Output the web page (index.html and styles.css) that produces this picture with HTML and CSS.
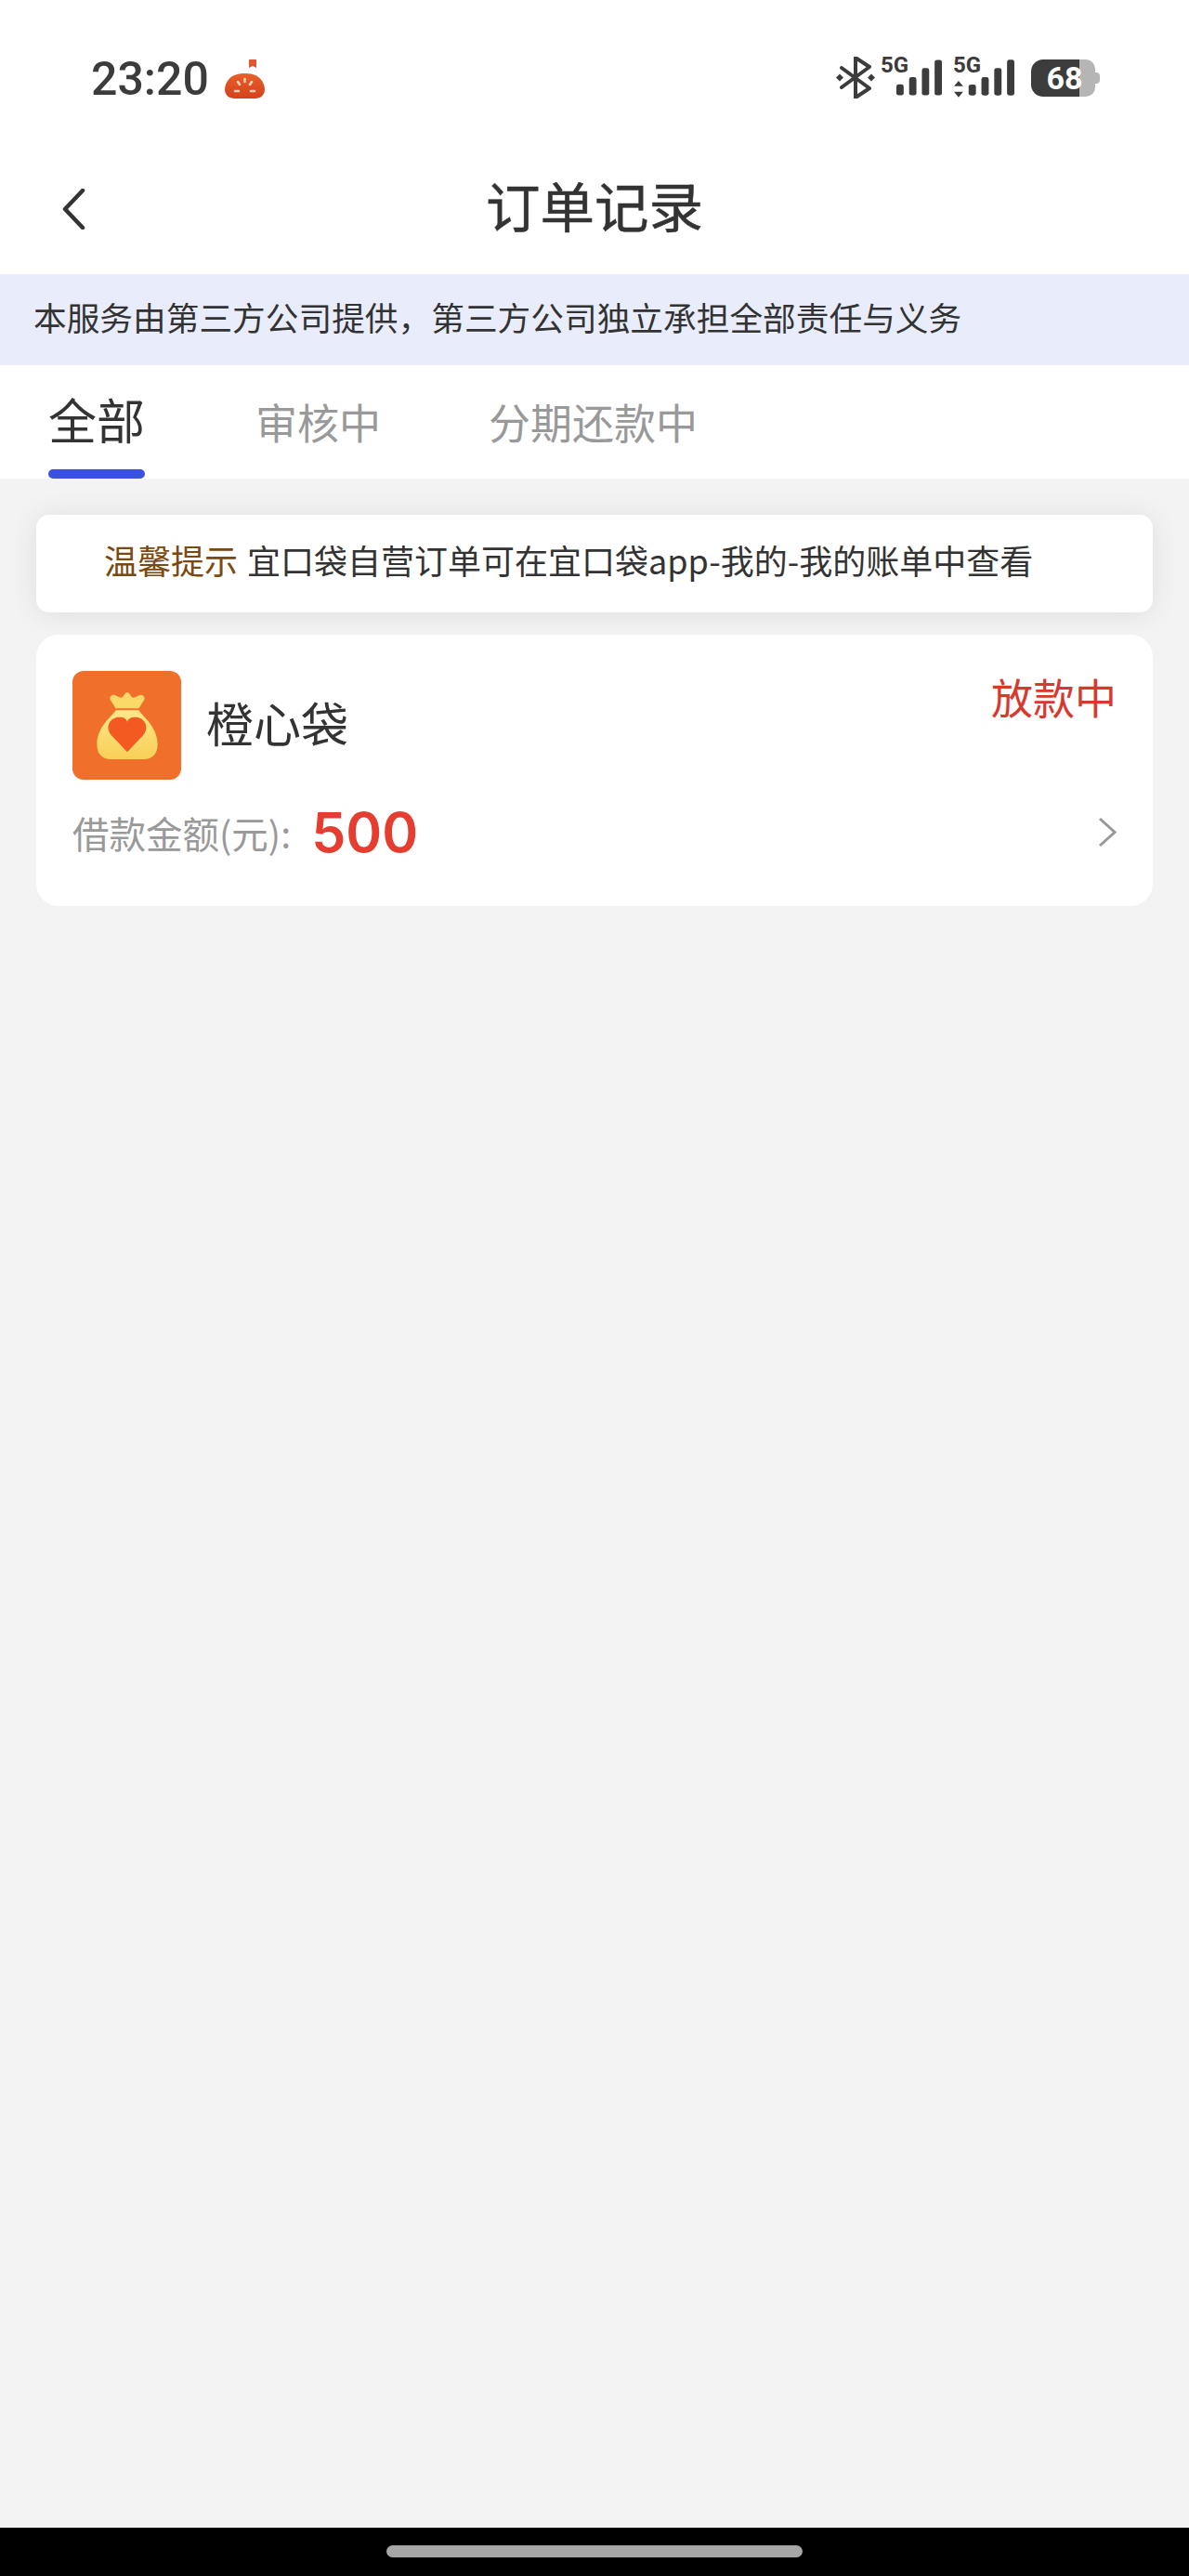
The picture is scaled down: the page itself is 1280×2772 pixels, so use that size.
FILE: index.html
```html
<!doctype html>
<html lang="zh-CN">
<head>
	<meta charset="UTF-8">
	<title>订单记录</title>
	<link rel="stylesheet" href="styles.css">
</head>
<body>
	<div class="page">
		<!-- 状态栏 -->
		<div class="status-bar">
			<div class="status-left">
				<span class="time">23:20</span>
				<svg class="tomato" width="43" height="42" viewBox="0 0 43 42">
					<defs>
						<linearGradient id="tomato" x1="0" y1="0" x2="0" y2="1">
							<stop offset="0" stop-color="#e8602a"/>
							<stop offset="1" stop-color="#d4411c"/>
						</linearGradient>
					</defs>
					<path d="M26 0h8v9l-4-2-4 2z" fill="#e2572f"/>
					<path d="M21.500 15c6 0 12 1 16 5 3.500 3.500 5.500 8 5.500 12 0 6-4 10-11 10H11C4 42 0 38 0 32c0-4 2-8.500 5.500-12 4-4 10-5 16-5z" fill="url(#tomato)"/>
					<g stroke="#f8d2b4" stroke-width="2.600" stroke-linecap="round">
						<path d="M21.500 21v3M14 24l2 3M29 24l-2 3M11 34h4M28 34h4"/>
					</g>
				</svg>
			</div>
			<div class="status-right">
				<svg width="42" height="45" viewBox="0 0 42 45">
					<path d="M6 12l30 22-15 10V1l15 10L6 33" fill="none" stroke="#3c3c3c" stroke-width="4" stroke-linejoin="round" stroke-linecap="round"/>
					<path d="M4 18.500l4 4-4 4-4-4zM38 18.500l4 4-4 4-4-4z" fill="#3c3c3c"/>
				</svg>
				<div class="signal">
					<span class="net">5G</span>
					<svg class="bars" width="49" height="39" viewBox="0 0 50 39">
						<rect x="0" y="27" width="8" height="12" rx="2.500"/>
						<rect x="14" y="19" width="8" height="20" rx="2.500"/>
						<rect x="28" y="9" width="8" height="30" rx="2.500"/>
						<rect x="42" y="0" width="8" height="39" rx="2.500"/>
					</svg>
				</div>
				<div class="signal signal-two">
					<span class="net">5G</span>
					<svg class="bars" width="65" height="39" viewBox="0 0 66 39">
						<path d="M5 23l5 6H0zM5 41l-5-6h10z" fill="#3c3c3c"/>
						<rect x="16" y="27" width="8" height="12" rx="2.500"/>
						<rect x="30" y="19" width="8" height="20" rx="2.500"/>
						<rect x="44" y="9" width="8" height="30" rx="2.500"/>
						<rect x="58" y="0" width="8" height="39" rx="2.500"/>
					</svg>
				</div>
				<div class="battery">
					<div class="battery-body">
						<span class="battery-num">68</span>
					</div>
					<div class="battery-nub"></div>
				</div>
			</div>
		</div>

		<!-- 标题栏 -->
		<div class="nav-bar">
			<svg class="back" width="26" height="44" viewBox="0 0 26 44">
				<path d="M23 2L4 22l19 20" fill="none" stroke="#333" stroke-width="4.500" stroke-linecap="round" stroke-linejoin="round"/>
			</svg>
			<h1>订单记录</h1>
		</div>

		<div class="notice">本服务由第三方公司提供，第三方公司独立承担全部责任与义务</div>

		<ul class="tabs">
			<li class="tab active">全部</li>
			<li class="tab">审核中</li>
			<li class="tab">分期还款中</li>
		</ul>

		<div class="content">
			<div class="tip">
				<span class="tip-label">温馨提示</span>
				<span class="tip-text">宜口袋自营订单可在宜口袋app-我的-我的账单中查看</span>
			</div>

			<div class="order">
				<div class="order-top">
					<div class="logo">
						<svg width="66" height="73" viewBox="0 0 68 76">
							<defs>
								<linearGradient id="bag" x1="0" y1="0" x2="0" y2="1">
									<stop offset="0" stop-color="#fbe88a"/>
									<stop offset="1" stop-color="#f9cf57"/>
								</linearGradient>
							</defs>
							<path d="M18 4c4 0 6 3 9 3s4-6 7-6 4 6 7 6 5-3 9-3c4 1 4 5 2 7l-5 8H21l-5-8c-2-2-2-6 2-7z" fill="#fbd968"/>
							<path d="M21 21h26c3 6 21 18 21 38 0 12-7 17-16 17H16C7 76 0 71 0 59c0-20 18-32 21-38z" fill="url(#bag)"/>
							<path d="M34 68L16 49c-8-10 0-21 10-20 4 0 7 2 8 5 1-3 4-5 8-5 10-1 18 10 10 20z" fill="#f25a22"/>
						</svg>
					</div>
					<div class="order-name">橙心袋</div>
					<div class="order-status">放款中</div>
				</div>
				<div class="order-bottom">
					<span class="amount-label">借款金额(元):</span>
					<span class="amount">500</span>
					<svg class="more" width="20" height="33" viewBox="0 0 20 33">
						<path d="M2 2l16 14.500L2 31" fill="none" stroke="#999" stroke-width="3"/>
					</svg>
				</div>
			</div>
		</div>

		<div class="home-bar">
			<div class="home-pill"></div>
		</div>
	</div>
</body>
</html>
```

FILE: styles.css
```css
* {
	margin: 0;
	padding: 0;
	box-sizing: border-box;
}

ul,ul li {
	list-style: none;
}

body {
	background: #f3f3f3;
	font-family: "Noto Sans CJK SC", "Noto Sans", sans-serif;
	color: #333;
}

.page {
	width: 1280px;
	height: 2772px;
	display: flex;
	flex-direction: column;
}

/* 状态栏 */
.status-bar {
	height: 165px;
	background: #fff;
	padding: 0 96px 0 98px;
	display: flex;
	justify-content: space-between;
	align-items: flex-start;
}

.status-left {
	display: flex;
	align-items: flex-start;
	gap: 17px;
	padding-top: 55px;
}

.time {
	font-family: Roboto, sans-serif;
	font-size: 50px;
	line-height: 60px;
	font-weight: 500;
	color: #3c3c3c;
}

.tomato {
	margin-top: 9px;
}

.status-right {
	display: flex;
	align-items: flex-start;
	padding-top: 61px;
}

.signal {
	width: 66px;
	height: 43px;
	margin-left: 6px;
	position: relative;
}

.signal-two {
	margin-left: 12px;
}

.net {
	position: absolute;
	left: 0;
	top: -3px;
	font-family: Roboto, sans-serif;
	font-size: 24px;
	line-height: 24px;
	font-weight: 700;
	color: #3c3c3c;
}

.bars {
	display: block;
	margin: 3px 0 0 17px;
	fill: #3c3c3c;
	overflow: visible;
}

.signal-two .bars {
	margin-left: 1px;
}

.battery {
	margin-left: 18px;
	margin-top: 3px;
	display: flex;
	align-items: center;
}

.battery-body {
	width: 69px;
	height: 40px;
	border-radius: 13px 10px 10px 13px;
	background: linear-gradient(to right, #3c3c3c 52px, #b5b5b5 52px);
	text-align: center;
}

.battery-num {
	display: block;
	padding-left: 3px;
	font-family: Roboto, sans-serif;
	font-size: 34px;
	line-height: 40px;
	font-weight: 700;
	color: #fff;
}

.battery-nub {
	width: 5px;
	height: 12px;
	background: #b5b5b5;
	border-radius: 0 4px 4px 0;
}

/* 标题栏 */
.nav-bar {
	height: 130px;
	padding-bottom: 20px;
	background: #fff;
	position: relative;
	display: flex;
	justify-content: center;
	align-items: center;
}

.nav-bar h1 {
	font-size: 58.500px;
	line-height: 110px;
	font-weight: 400;
	-webkit-text-stroke: 0.5px #333;
	color: #333;
}

.back {
	position: absolute;
	left: 66px;
	top: 38px;
}

.notice {
	height: 98px;
	padding-left: 36px;
	background: #e9edfb;
	font-size: 35.700px;
	line-height: 92px;
	color: #333;
}

/* tab */
.tabs {
	height: 122px;
	background: #fff;
	display: flex;
	align-items: flex-start;
	padding-left: 52px;
}

.tab {
	font-size: 45px;
	line-height: 66px;
	padding-top: 28px;
	color: #999;
	margin-right: 116px;
}

.tab.active {
	width: 104px;
	height: 122px;
	margin-right: 119px;
	text-align: center;
	font-size: 52px;
	padding-top: 25px;
	color: #333;
	position: relative;
}

.tab.active::after {
	content: "";
	position: absolute;
	left: 0;
	right: 0;
	bottom: 0;
	height: 10px;
	border-radius: 5px;
	background: #3a50e0;
}

.content {
	flex: 1;
	padding: 39px 39px 0;
}

.tip {
	height: 105px;
	padding-left: 73px;
	padding-bottom: 10px;
	background: #fff;
	border-radius: 14px;
	box-shadow: 0 2px 30px rgba(0,0,0,0.09);
	display: flex;
	align-items: center;
	gap: 10px;
	font-size: 36px;
	line-height: 50px;
}

.tip-label {
	color: #7a4a10;
}

.order {
	height: 292px;
	margin-top: 24px;
	position: relative;
	padding: 39px 39px 0;
	background: #fff;
	border-radius: 24px;
}

.order-top {
	display: flex;
	align-items: flex-start;
}

.logo {
	width: 117px;
	height: 117px;
	border-radius: 12px;
	background: #ef6f2b;
	display: flex;
	align-items: center;
	justify-content: center;
}

.order-name {
	margin-left: 27px;
	font-size: 51px;
	line-height: 111px;
	color: #333;
}

.order-status {
	margin-left: auto;
	margin-top: -5px;
	font-size: 45px;
	line-height: 66px;
	color: #d8392f;
}

.order-bottom {
	display: flex;
	align-items: center;
	margin-top: 16px;
	height: 80px;
}

.amount-label {
	font-size: 39.500px;
	color: #999;
}

.amount {
	margin-left: 22px;
	font-family: Inter, sans-serif;
	font-size: 59px;
	font-weight: 600;
	color: #e53e30;
}

.more {
	margin-left: auto;
}

.home-bar {
	height: 52px;
	background: #000;
	display: flex;
	justify-content: center;
	padding-top: 19px;
}

.home-pill {
	width: 448px;
	height: 13px;
	border-radius: 7px;
	background: #a6a6a6;
}
```
